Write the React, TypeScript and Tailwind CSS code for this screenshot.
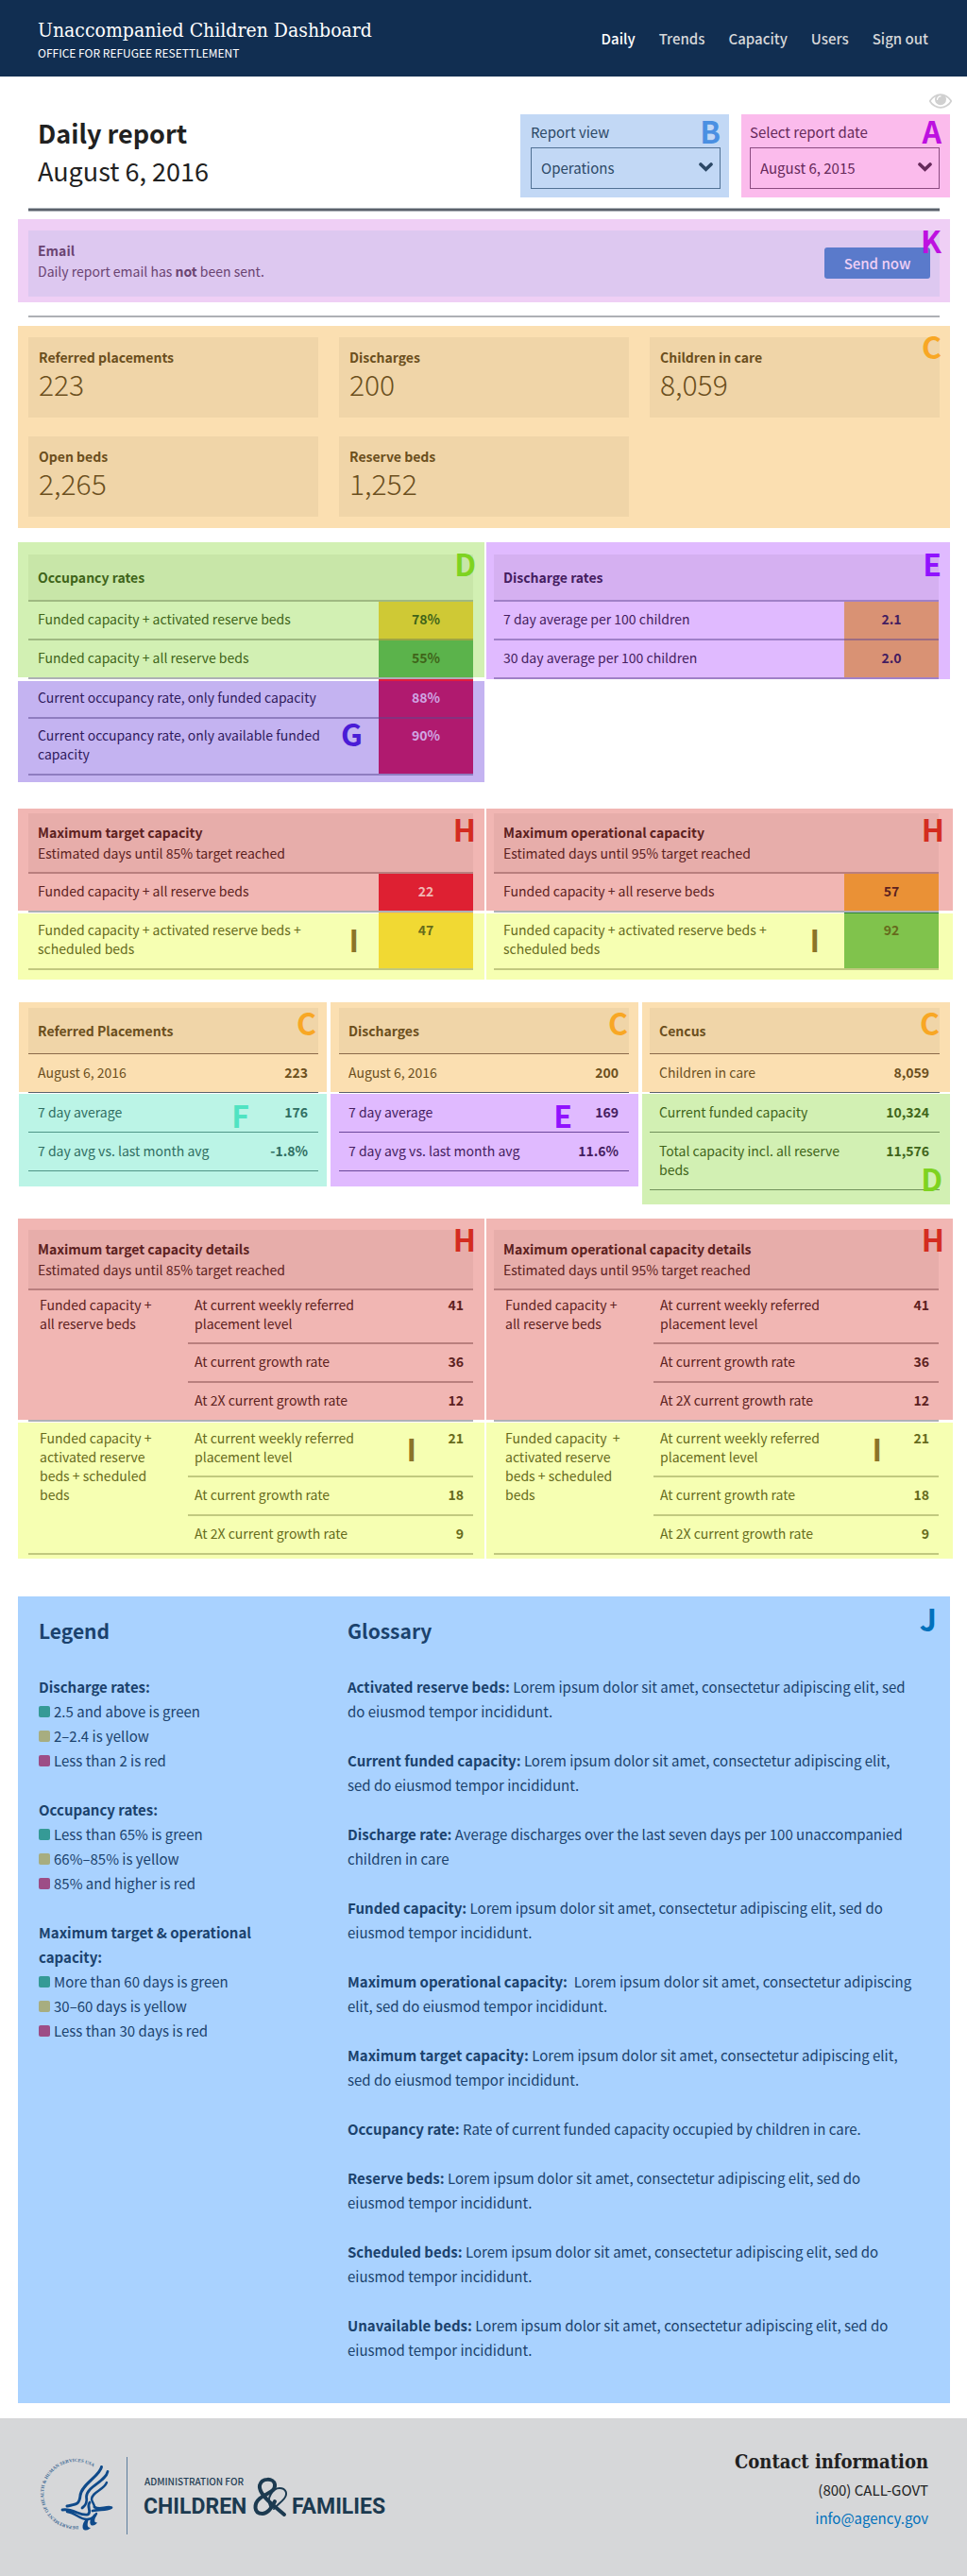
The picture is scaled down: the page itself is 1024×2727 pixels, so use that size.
import type { ReactNode } from 'react';

type Tone = { panel: string; head: string; text: string; line: string };

const green: Tone = { panel: 'bg-[#d2f0b3]', head: 'bg-[#c8e6a8]', text: 'text-[#3f6419]', line: 'border-[#6c8251]/50' };
const purple: Tone = { panel: 'bg-[#e0baff]', head: 'bg-[#d5b0f1]', text: 'text-[#441d60]', line: 'border-[#604691]/50' };
const violet: Tone = { panel: 'bg-[#c4b3f1]', head: 'bg-[#c4b3f1]', text: 'text-[#2f1a5c]', line: 'border-[#5a478f]/50' };
const red: Tone = { panel: 'bg-[#f1b6b3]', head: 'bg-[#e7adaa]', text: 'text-[#5c2120]', line: 'border-[#814849]/50' };
const yellow: Tone = { panel: 'bg-[#f6ffb2]', head: 'bg-[#f6ffb2]', text: 'text-[#666b1c]', line: 'border-[#8c934c]/50' };
const orange: Tone = { panel: 'bg-[#fbdfb1]', head: 'bg-[#f0d5a8]', text: 'text-[#6b4f1d]', line: 'border-[#8b6a4a]' };
const teal: Tone = { panel: 'bg-[#bbf4e6]', head: 'bg-[#bbf4e6]', text: 'text-[#306e62]', line: 'border-[#4f9688]' };
const purpleThin: Tone = { ...purple, line: 'border-[#6b4799]' };
const greenThin: Tone = { ...green, line: 'border-[#71915a]' };

function Badge({ letter, className }: { letter: string; className: string }) {
  return (
    <span aria-hidden="true" className={`pointer-events-none absolute text-[32px] leading-[28px] font-bold ${className}`}>
      {letter}
    </span>
  );
}

function Heading({ title, sub, tone }: { title: string; sub?: string; tone: Tone }) {
  return (
    <div className={`px-[10px] ${tone.head} ${sub ? 'py-[9px] leading-[22px]' : 'py-[14px] leading-5'}`}>
      <h3 className="font-bold">{title}</h3>
      {sub && <p>{sub}</p>}
    </div>
  );
}

type Rate = { label: string; value: string; cell: string };

function RateRows({ rows, tone, pad = 'pt-2' }: { rows: Rate[]; tone: Tone; pad?: string }) {
  return (
    <table className="w-full table-fixed border-separate border-spacing-0">
      <tbody>
        {rows.map((r, i) => {
          const line = i < rows.length - 1 ? `border-b-2 ${tone.line}` : '';
          return (
            <tr key={r.label} className="align-top">
              <th scope="row" className={`${pad} pr-[35px] pb-[11px] pl-[10px] text-left font-normal ${line}`}>{r.label}</th>
              <td className={`w-[100px] ${pad} pb-[11px] text-center font-bold ${line} ${r.cell}`}>{r.value}</td>
            </tr>
          );
        })}
      </tbody>
    </table>
  );
}

function Seam({ className, cell }: { className: string; cell?: string }) {
  return (
    <div className={`border-t-2 border-[#aeb0b5] ${className}`}>
      {cell && <div className={`ml-auto h-full w-[100px] ${cell}`} />}
    </div>
  );
}

function Capacity({ title, sub, rows, cell, edge, seam, low }: { title: string; sub: string; rows: [Rate, Rate]; cell: string; edge: string; seam: string; low: string }) {
  return (
    <section>
      <div className={`relative pt-[5px] ${edge} ${red.panel} ${red.text}`}>
        <Heading title={title} sub={sub} tone={red} />
        <div className={`border-t-2 ${red.line}`}>
          <RateRows rows={[rows[0]]} tone={red} />
        </div>
        <Badge letter="H" className="top-[7px] right-[9px] text-[#d42c20]" />
      </div>
      <Seam className={`h-[3px] ${seam}`} cell={cell} />
      <div className={`relative pb-[10px] ${edge} ${yellow.panel} ${yellow.text}`}>
        <div className={`border-b-2 ${yellow.line}`}>
          <RateRows rows={[rows[1]]} tone={yellow} pad="pt-[7px]" />
        </div>
        <Badge letter="I" className={`top-[13px] text-[#8b7428] ${low}`} />
      </div>
    </section>
  );
}

type Pair = [string, string];

function MetricRows({ rows, tone, lined }: { rows: Pair[]; tone: Tone; lined: boolean }) {
  return (
    <table className="w-full border-separate border-spacing-0">
      <tbody>
        {rows.map(([label, value]) => (
          <tr key={label} className="align-top">
            <th scope="row" className={`pt-[9px] pb-[11px] pl-[10px] text-left font-normal ${lined ? `border-b ${tone.line}` : ''}`}>{label}</th>
            <td className={`pt-[9px] pr-[11px] pb-[11px] pl-5 text-right font-bold ${lined ? `border-b ${tone.line}` : ''}`}>{value}</td>
          </tr>
        ))}
      </tbody>
    </table>
  );
}

function Metric({ title, first, rows, tone, edge, seam, foot, children }: { title: string; first: Pair; rows: Pair[]; tone: Tone; edge: string; seam: string; foot: string; children: ReactNode }) {
  return (
    <section>
      <div className={`relative pt-[6px] ${edge} ${orange.panel} ${orange.text}`}>
        <Heading title={title} tone={orange} />
        <div className={`border-t ${orange.line}`}>
          <MetricRows rows={[first]} tone={orange} lined={false} />
        </div>
        <Badge letter="C" className="top-[7px] right-[11px] text-[#f8a724]" />
      </div>
      <div className={`h-[2px] border-t border-[#5b616b] ${seam}`} />
      <div className={`relative ${edge} ${foot} ${tone.panel} ${tone.text}`}>
        <MetricRows rows={rows} tone={tone} lined />
        {children}
      </div>
    </section>
  );
}

const levels = ['At current weekly referred placement level', 'At current growth rate', 'At 2X current growth rate'];

function DetailRows({ label, values, tone, lead }: { label: string; values: string[]; tone: Tone; lead: string }) {
  return (
    <table className="w-full table-fixed border-separate border-spacing-0">
      <colgroup>
        <col className="w-[169px]" />
        <col />
        <col className="w-[100px]" />
      </colgroup>
      <tbody>
        {levels.map((level, i) => {
          const line = i < 2 ? `border-b-2 ${tone.line}` : '';
          const space = i === 0 ? `${lead} pb-[10px]` : 'pt-2 pb-[11px]';
          return (
            <tr key={level} className="align-top">
              {i === 0 && (
                <th scope="rowgroup" rowSpan={3} className={`${lead} pr-8 pl-3 text-left font-normal`}>{label}</th>
              )}
              <th scope="row" className={`${space} pl-[7px] text-left font-normal ${line}`}>{level}</th>
              <td className={`${space} pr-[10px] text-right font-bold ${line}`}>{values[i]}</td>
            </tr>
          );
        })}
      </tbody>
    </table>
  );
}

function Details({ title, sub, label, edge, seam, low }: { title: string; sub: string; label: string; edge: string; seam: string; low: string }) {
  return (
    <section>
      <div className={`relative pt-3 ${edge} ${red.panel} ${red.text}`}>
        <Heading title={title} sub={sub} tone={red} />
        <div className={`border-t-2 ${red.line}`}>
          <DetailRows label="Funded capacity + all reserve beds" values={['41', '36', '12']} tone={red} lead="pt-[5px]" />
        </div>
        <Badge letter="H" className="top-[7px] right-[9px] text-[#d42c20]" />
      </div>
      <Seam className={`h-[3px] ${seam}`} />
      <div className={`relative pb-1 ${edge} ${yellow.panel} ${yellow.text}`}>
        <div className={`border-b-2 ${yellow.line}`}>
          <DetailRows label={label} values={['21', '18', '9']} tone={yellow} lead="pt-[6px]" />
        </div>
        <Badge letter="I" className={`top-[13px] text-[#8b7428] ${low}`} />
      </div>
    </section>
  );
}

function Picker({ id, label, value, className, border, badge }: { id: string; label: string; value: string; className: string; border: string; badge: ReactNode }) {
  return (
    <div className={`relative w-[221px] pt-2 pb-[9px] ${className}`}>
      <label htmlFor={id} className="block text-[15px] leading-[22px]">{label}</label>
      <div className="relative mt-[5px]">
        <select id={id} className={`block h-[44px] w-full appearance-none border bg-transparent px-[10px] text-[15px] ${border}`}>
          <option>{value}</option>
        </select>
        <svg className="pointer-events-none absolute top-4 right-2 h-[10px] w-[15px]" viewBox="0 0 15 10" fill="none" stroke="currentColor" strokeWidth="3.6" strokeLinecap="round" aria-hidden="true">
          <path d="M2 2l5.500 5.300L13 2" />
        </svg>
      </div>
      {badge}
    </div>
  );
}

const totals: Pair[] = [
  ['Referred placements', '223'],
  ['Discharges', '200'],
  ['Children in care', '8,059'],
  ['Open beds', '2,265'],
  ['Reserve beds', '1,252'],
];

const swatches = ['bg-[#359a96]', 'bg-[#a7ad80]', 'bg-[#9d4d86]'];
const legend = [
  { title: 'Discharge rates:', items: ['2.5 and above is green', '2–2.4 is yellow', 'Less than 2 is red'] },
  { title: 'Occupancy rates:', items: ['Less than 65% is green', '66%–85% is yellow', '85% and higher is red'] },
  { title: 'Maximum target & operational capacity:', items: ['More than 60 days is green', '30–60 days is yellow', 'Less than 30 days is red'] },
];

const lorem = 'Lorem ipsum dolor sit amet, consectetur adipiscing elit, sed do eiusmod tempor incididunt.';
const glossary: Pair[] = [
  ['Activated reserve beds:', ` ${lorem}`],
  ['Current funded capacity:', ` ${lorem}`],
  ['Discharge rate:', ' Average discharges over the last seven days per 100 unaccompanied children in care'],
  ['Funded capacity:', ` ${lorem}`],
  ['Maximum operational capacity:', `\u00a0 ${lorem}`],
  ['Maximum target capacity:', ` ${lorem}`],
  ['Occupancy rate:', ' Rate of current funded capacity occupied by children in care.'],
  ['Reserve beds:', ` ${lorem}`],
  ['Scheduled beds:', ` ${lorem}`],
  ['Unavailable beds:', ` ${lorem}`],
];

function AgencyLogo() {
  return (
    <svg className="h-[90px] w-[380px]" viewBox="0 0 380 90" role="img" aria-label="Administration for Children and Families">
      <defs>
        <path id="seal-arc" d="M43 78A34 34 0 1 1 62 18" />
      </defs>
      <text fill="#3f6a94" className="font-['Liberation_Serif'] text-[5px] font-bold">
        <textPath href="#seal-arc">DEPARTMENT OF HEALTH &amp; HUMAN SERVICES USA</textPath>
      </text>
      <g fill="none" stroke="#0f4a8a" strokeLinecap="round" strokeLinejoin="round">
        <path strokeWidth="3" d="M67.500 15.500C66 25 46 34 45 46C44 56 40 55 31 57" />
        <path strokeWidth="2.800" d="M74 20.500C72 31 52 36 51.500 47C53 55 49 57 47 59" />
        <path strokeWidth="2.400" d="M73 32C70 40 57 42 57 50C58 54 60 55 60 58" />
        <path strokeWidth="2.800" d="M26 61C37 59 45 68 53 66C58 63 51 58 55 53" />
        <path strokeWidth="2.800" d="M60 58C66 62 71 57 78 58.500C72 62 66 60 58 62" />
        <path strokeWidth="2.400" d="M31 63C40 64 44 71 52 71C57 71 61 68 62 65" />
      </g>
      <g fill="#0f4a8a">
        <path d="M52 70C47 74 46 82 50 82.500C53 83 55 81 56 80C52 80 52 76 54 71Z" />
        <path d="M60 65C55 70 54 76 57 77.500C60 78 62 76 63 74.500C59 74.500 60 71 62 67Z" />
      </g>
      <path d="M94.500 5V87" stroke="#5d7d9c" strokeWidth="1" />
      <text x="113" y="35" fill="#1f3d54" className="font-['Noto_Sans_CJK_SC'] text-[10px] font-medium">ADMINISTRATION FOR</text>
      <text x="112" y="65" fill="#1c3a50" className="font-['Roboto'] text-[23px] font-bold">CHILDREN</text>
      <text x="269" y="65" fill="#1c3a50" className="font-['Roboto'] text-[23px] font-bold">FAMILIES</text>
      <g fill="none" stroke="#1c3a50" strokeLinecap="round" strokeLinejoin="round">
        <path strokeWidth="4" d="M251 52C248 60 242 65 238 65C228 65 229 54 235 49C242 43 252 42 251 34C250 27 237 27 235 35C234 41 240 48 248 55L261 66" />
        <path strokeWidth="2" d="M246 57C242 48 249 38 256 38C263 38 265 44 261 49C258 53 253 56 250 60" />
      </g>
    </svg>
  );
}

export default function App() {
  return (
    <div className="min-h-screen bg-white font-['Noto_Sans_CJK_SC',sans-serif] text-[14px] leading-5 text-[#212121]">
      <header className="flex items-center justify-between bg-[#112e51] pt-[19px] pr-[41px] pb-[15px] pl-10 text-white">
        <div>
          <p className="font-['DejaVu_Serif_Condensed','DejaVu_Serif',serif] text-[21px] leading-[26px]">Unaccompanied Children Dashboard</p>
          <p className="text-[12px] leading-[21px]">OFFICE FOR REFUGEE RESETTLEMENT</p>
        </div>
        <nav aria-label="Main" className="-mt-1 flex gap-[25px] text-[15px] leading-6 font-medium text-[#d6d7d9]">
          <a href="#daily" aria-current="page" className="text-white">Daily</a>
          <a href="#trends">Trends</a>
          <a href="#capacity">Capacity</a>
          <a href="#users">Users</a>
          <a href="#signout">Sign out</a>
        </nav>
      </header>

      <main className="pr-[18px] pb-4 pl-[19px]">
        <div className="relative flex justify-between pt-10">
          <svg className="absolute top-[18px] -right-[2px] h-[16px] w-6" viewBox="0 384 1792 1152" fill="#d0d0d0" aria-hidden="true">
            <path d="M1664 960q-152-236-381-353 61 104 61 225 0 185-131.500 316.500t-316.500 131.500-316.500-131.500-131.500-316.500q0-121 61-225-229 117-381 353 133 205 333.500 326.500t434.500 121.500 434.500-121.500 333.500-326.500zm-720-384q0-20-14-34t-34-14q-125 0-214.500 89.500t-89.500 214.500q0 20 14 34t34 14 34-14 14-34q0-86 61-147t147-61q20 0 34-14t14-34zm848 384q0 34-20 69-140 230-376.500 368.500t-499.500 138.500-499.500-139-376.500-368q-20-35-20-69t20-69q140-229 376.500-368t499.500-139 499.500 139 376.500 368q20 35 20 69z" />
          </svg>
          <h1 className="pl-[21px] text-[27px] leading-10 font-bold">
            Daily report
            <span className="block font-normal">August 6, 2016</span>
          </h1>
          <div className="flex gap-[13px]">
            <Picker id="view" label="Report view" value="Operations" className="bg-[#c2d8f5] pr-[9px] pl-[11px] text-[#2c4866]" border="border-[#517194]" badge={<Badge letter="B" className="top-[3px] right-[9px] text-[#4a90e2]" />} />
            <Picker id="date" label="Select report date" value="August 6, 2015" className="bg-[#fbbbec] pr-[11px] pl-[9px] text-[#66295a]" border="border-[#8b4b80]" badge={<Badge letter="A" className="top-[3px] right-[9px] text-[#bd10e0]" />} />
          </div>
        </div>

        <div className="mx-[11px] mt-[11px] h-1 border-y border-[#adb3b9] bg-[#5b616b]" />

        <section className="relative mt-2 bg-[#efcff5] px-[11px] pt-3 pb-[6px]">
          <div className="flex items-start justify-between bg-[#ddc8f0] px-[10px] pt-[9px] pb-4 text-[#6a4472]">
            <div className="pt-px leading-[22px]">
              <h2 className="font-bold">Email</h2>
              <p>Daily report email has <strong>not</strong> been sent.</p>
            </div>
            <button type="button" className="mt-[9px] h-[33px] w-28 rounded-[3px] bg-[#5a7acb] text-[15px] font-medium text-[#efcff5]">Send now</button>
          </div>
          <Badge letter="K" className="top-2 right-[9px] text-[#bd10e0]" />
        </section>

        <div className="mx-[11px] mt-[14px] h-[2px] bg-[#aeb0b5]" />

        <section className="relative mt-[9px] grid grid-cols-3 gap-x-[22px] gap-y-5 bg-[#fbdfb1] px-[11px] py-3 text-[#6b4f1d]">
          {totals.map(([label, value]) => (
            <div key={label} className="bg-[#f0d5a8] px-[11px] pt-[11px] pb-[18px]">
              <h2 className="font-bold">{label}</h2>
              <p className="font-['Noto_Sans_CJK_SC_Light','Noto_Sans_CJK_SC',sans-serif] text-[30px] leading-9 font-light">{value}</p>
            </div>
          ))}
          <Badge letter="C" className="top-[7px] right-[9px] text-[#f8a724]" />
        </section>

        <div className="mt-[15px] -mr-[3px] grid grid-cols-2 items-start gap-[2px]">
          <section>
            <div className={`relative pt-[13px] pr-3 pl-[11px] ${green.panel} ${green.text}`}>
              <Heading title="Occupancy rates" tone={green} />
              <div className={`border-t-2 ${green.line}`}>
                <RateRows
                  tone={green}
                  rows={[
                    { label: 'Funded capacity + activated reserve beds', value: '78%', cell: 'bg-[#cfc935]' },
                    { label: 'Funded capacity + all reserve beds', value: '55%', cell: 'bg-[#5bb34b]' },
                  ]}
                />
              </div>
              <Badge letter="D" className="top-2 right-[9px] text-[#7ed321]" />
            </div>
            <Seam className="mr-3 ml-[11px] h-1" cell="bg-[#e31c3d]" />
            <div className={`relative pr-3 pb-[7px] pl-[11px] ${violet.panel} ${violet.text}`}>
              <div className={`border-b-2 ${violet.line}`}>
                <RateRows
                  tone={violet}
                  pad="pt-[7px]"
                  rows={[
                    { label: 'Current occupancy rate, only funded capacity', value: '88%', cell: 'bg-[#b01a6f] text-[#cfa6e4]' },
                    { label: 'Current occupancy rate, only available funded capacity', value: '90%', cell: 'bg-[#b01a6f] text-[#cfa6e4]' },
                  ]}
                />
              </div>
              <Badge letter="G" className="top-[41px] right-[129px] text-[#4a1cd6]" />
            </div>
          </section>
          <section className={`relative mr-[3px] pt-[13px] pr-3 pl-2 ${purple.panel} ${purple.text}`}>
            <Heading title="Discharge rates" tone={purple} />
            <div className={`border-y-2 ${purple.line}`}>
              <RateRows
                tone={purple}
                rows={[
                  { label: '7 day average per 100 children', value: '2.1', cell: 'bg-[#d99274]' },
                  { label: '30 day average per 100 children', value: '2.0', cell: 'bg-[#d99274]' },
                ]}
              />
            </div>
            <Badge letter="E" className="top-2 right-[9px] text-[#9013fe]" />
          </section>
        </div>

        <div className="mt-7 -mr-[3px] grid grid-cols-2 items-start gap-[2px]">
          <Capacity
            title="Maximum target capacity"
            sub="Estimated days until 85% target reached"
            edge="pl-[11px] pr-3"
            seam="ml-[11px] mr-3"
            cell="bg-[#f9c642]"
            low="right-[133px]"
            rows={[
              { label: 'Funded capacity + all reserve beds', value: '22', cell: 'bg-[#de2032] text-[#f1b6b3]' },
              { label: 'Funded capacity + activated reserve beds + scheduled beds', value: '47', cell: 'bg-[#f1d933]' },
            ]}
          />
          <Capacity
            title="Maximum operational capacity"
            sub="Estimated days until 95% target reached"
            edge="pl-2 pr-[15px]"
            seam="ml-2 mr-[15px]"
            cell="bg-[#2e8540]"
            low="right-[141px]"
            rows={[
              { label: 'Funded capacity + all reserve beds', value: '57', cell: 'bg-[#ea9136]' },
              { label: 'Funded capacity + activated reserve beds + scheduled beds', value: '92', cell: 'bg-[#80c34c]' },
            ]}
          />
        </div>

        <div className="mt-6 ml-px grid grid-cols-3 items-start gap-1">
          <Metric title="Referred Placements" first={['August 6, 2016', '223']} rows={[['7 day average', '176'], ['7 day avg vs. last month avg', '-1.8%']]} tone={teal} edge="pl-[10px] pr-[9px]" seam="ml-[10px] mr-[9px]" foot="pb-4">
            <Badge letter="F" className="top-2 right-[82px] text-[#50e3c2]" />
          </Metric>
          <Metric title="Discharges" first={['August 6, 2016', '200']} rows={[['7 day average', '169'], ['7 day avg vs. last month avg', '11.6%']]} tone={purpleThin} edge="pl-[9px] pr-[10px]" seam="ml-[9px] mr-[10px]" foot="pb-4">
            <Badge letter="E" className="top-2 right-[70px] text-[#9013fe]" />
          </Metric>
          <Metric title="Cencus" first={['Children in care', '8,059']} rows={[['Current funded capacity', '10,324'], ['Total capacity incl. all reserve beds', '11,576']]} tone={greenThin} edge="pl-2 pr-[11px]" seam="ml-2 mr-[11px]" foot="pb-[15px]">
            <Badge letter="D" className="right-2 bottom-[14px] text-[#7ed321]" />
          </Metric>
        </div>

        <div className="mt-[15px] -mr-[3px] grid grid-cols-2 items-start gap-[2px]">
          <Details title="Maximum target capacity details" sub="Estimated days until 85% target reached" label="Funded capacity + activated reserve beds + scheduled beds" edge="pl-[11px] pr-3" seam="ml-[11px] mr-3" low="right-[72px]" />
          <Details title="Maximum operational capacity details" sub="Estimated days until 95% target reached" label={'Funded capacity\u00a0 + activated reserve beds + scheduled beds'} edge="pl-2 pr-[15px]" seam="ml-2 mr-[15px]" low="right-[75px]" />
        </div>

        <div className="relative mt-10 grid grid-cols-[326px_1fr] bg-[#a9d2ff] pt-5 pb-[43px] text-[15px] leading-[26px] text-[#1b426d]">
          <section className="pr-[70px] pl-[22px]">
            <h2 className="mb-[31px] text-[21px] leading-8 font-bold">Legend</h2>
            {legend.map((group) => (
              <div key={group.title} className="mb-[26px]">
                <h3 className="font-bold">{group.title}</h3>
                <ul>
                  {group.items.map((item, i) => (
                    <li key={item} className="flex items-center gap-1">
                      <span className={`size-3 rounded-[2px] ${swatches[i]}`} />
                      {item}
                    </li>
                  ))}
                </ul>
              </div>
            ))}
          </section>
          <section className="pr-[38px] pl-[23px]">
            <h2 className="mb-[31px] text-[21px] leading-8 font-bold">Glossary</h2>
            <div className="flex flex-col gap-[26px]">
              {glossary.map(([term, text]) => (
                <p key={term}>
                  <strong>{term}</strong>
                  {text}
                </p>
              ))}
            </div>
          </section>
          <Badge letter="J" className="top-[9px] right-[14px] text-[#0071bc]" />
        </div>
      </main>

      <footer className="flex items-start justify-between bg-[#d6d7d9] pt-[31px] pr-[41px] pb-[41px]">
        <div className="pt-[5px] pl-10">
          <AgencyLogo />
        </div>
        <div className="text-right text-[15px] leading-[30px]">
          <h2 className="font-['DejaVu_Serif_Condensed','DejaVu_Serif',serif] text-[20px] font-bold">Contact information</h2>
          <p>(800) CALL-GOVT</p>
          <a href="mailto:info@agency.gov" className="text-[#0071bc]">info@agency.gov</a>
        </div>
      </footer>
    </div>
  );
}
